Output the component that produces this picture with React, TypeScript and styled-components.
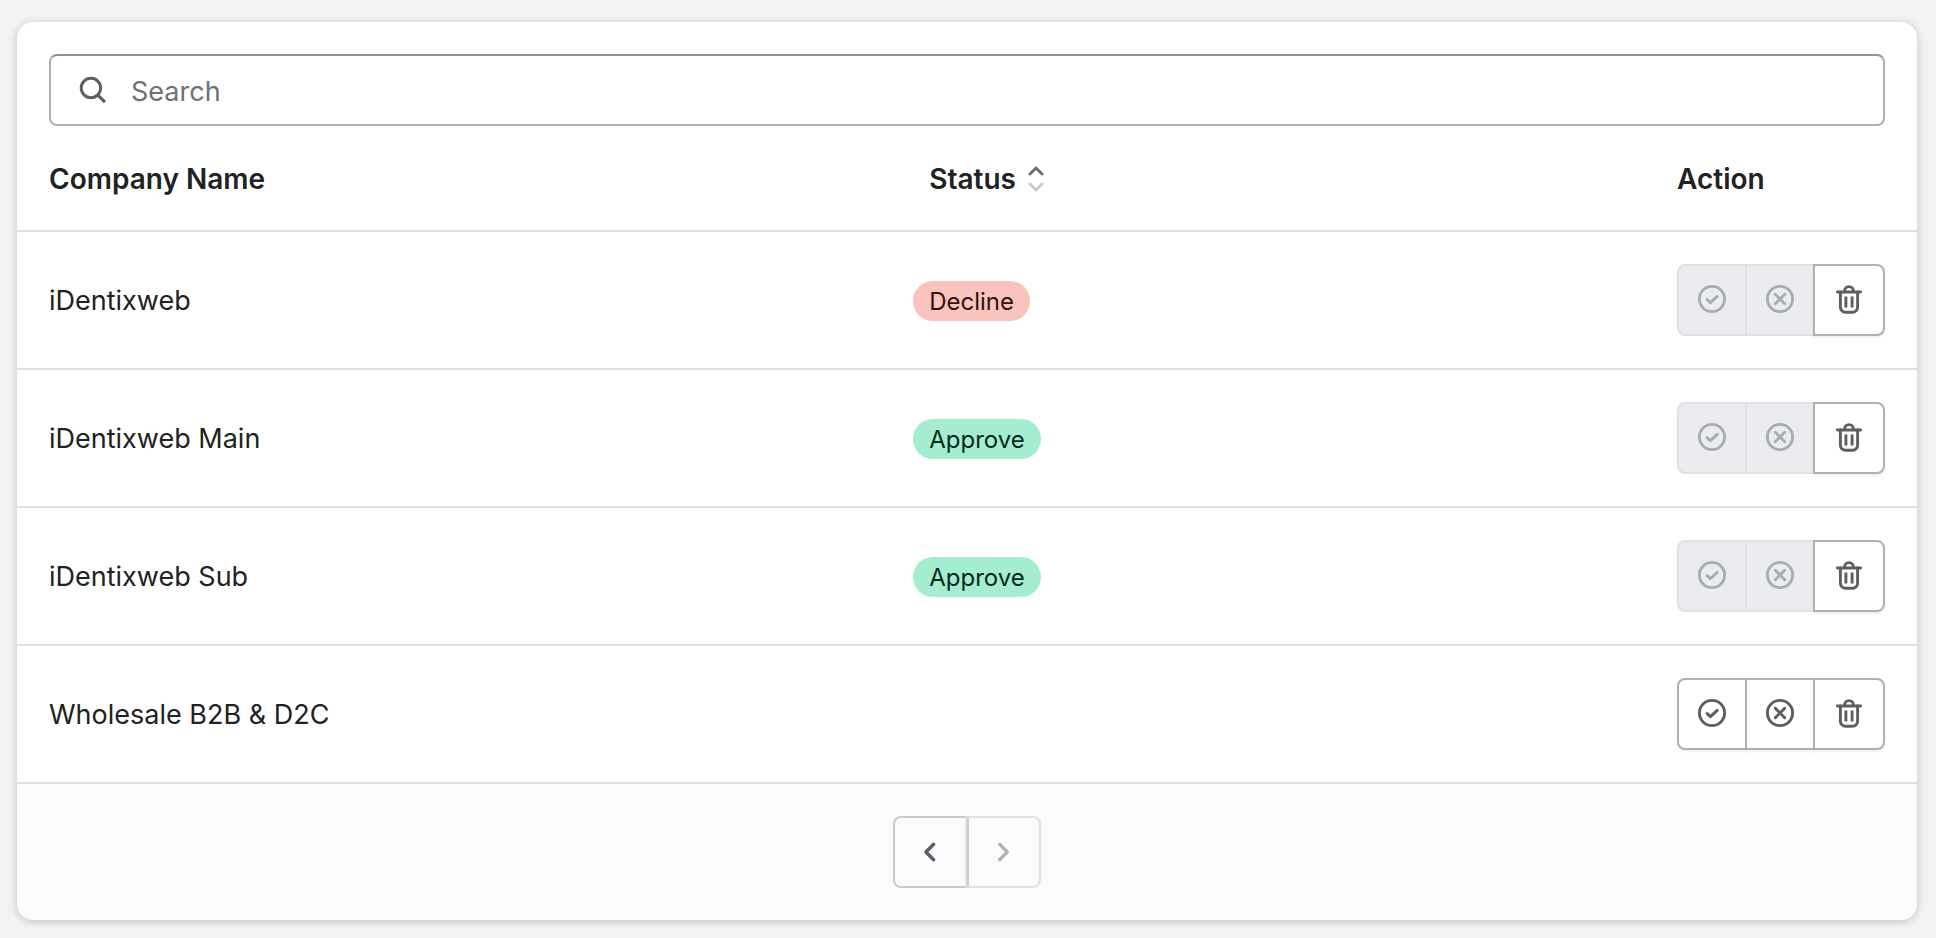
import React, { useState } from "react";
import styled, { createGlobalStyle, css } from "styled-components";

const GlobalStyle = createGlobalStyle`
  *, *::before, *::after { box-sizing: border-box; }
  body {
    margin: 0;
    background: #f1f2f4;
    color: #202223;
    font-family: Inter, "Liberation Sans", sans-serif;
    font-size: 27px;
    line-height: 40px;
  }
  button, input { font: inherit; color: inherit; }
`;

const Page = styled.main`
  padding: 22px 19px 18px 17px;
`;

const Card = styled.section`
  overflow: hidden;
  border-radius: 16px;
  background: #fff;
  box-shadow: 0 0 10px rgba(23, 24, 24, 0.05), 0 2px 8px rgba(0, 0, 0, 0.15);
`;

const SearchField = styled.label`
  display: flex;
  align-items: center;
  gap: 18px;
  height: 72px;
  margin: 32px 32px 0;
  padding: 0 22px;
  border: 2px solid #aeb0b2;
  border-top-color: #8f9193;
  border-radius: 8px;
  color: #5c5f62;
`;

const SearchInput = styled.input`
  flex: 1;
  min-width: 0;
  height: 42px;
  padding: 2px 0 0;
  border: 0;
  outline: 0;
  background: transparent;
  &::placeholder { color: #6d7175; opacity: 1; }
`;

const Table = styled.table`
  width: 100%;
  table-layout: fixed;
  border-spacing: 0;
`;

const StatusCol = styled.col`
  width: 40.2%;
`;

const ActionCol = styled.col`
  width: 272px;
`;

const HeadCell = styled.th`
  height: 104px;
  padding: 2px 32px 0;
  text-align: left;
  font-weight: 600;
  font-size: 28px;
`;

const SortButton = styled.button`
  display: flex;
  align-items: center;
  gap: 8px;
  padding: 0 16px;
  border: 0;
  background: none;
  font-weight: 600;
  cursor: pointer;
`;

const Cell = styled.td`
  height: 138px;
  padding: 0 32px;
  border-top: 2px solid #dfe0e1;
`;

const NameCell = styled(Cell)`
  padding-top: 2px;
`;

const Badge = styled.span<{ $tone: "critical" | "success" }>`
  display: inline-flex;
  align-items: center;
  height: 40px;
  padding: 2px 16px 0;
  border-radius: 20px;
  font-size: 24px;
  vertical-align: middle;
  ${({ $tone }) =>
    $tone === "critical"
      ? css`background: #f9c4bd; color: #33120d;`
      : css`background: #a4edd0; color: #04291c;`}
`;

const ButtonGroup = styled.div`
  display: flex;
  width: max-content;
`;

const ActionButton = styled.button`
  position: relative;
  display: flex;
  align-items: center;
  justify-content: center;
  width: 70px;
  height: 72px;
  padding: 0;
  border: 2px solid #aeb0b2;
  background: #fff;
  color: #5c5f62;
  box-shadow: 0 2px 2px rgba(0, 0, 0, 0.06);
  cursor: pointer;

  & + & { margin-left: -2px; }
  &:first-child { border-radius: 8px 0 0 8px; }
  &:last-child { width: 72px; border-radius: 0 8px 8px 0; }
  &:disabled {
    border-color: #e0e1e3;
    background: #ebecef;
    color: #a9adb2;
    box-shadow: none;
    cursor: default;
  }
`;

const Footer = styled.nav`
  display: flex;
  justify-content: center;
  padding: 32px 0;
  border-top: 2px solid #dfe0e1;
  background: #fafbfc;
`;

const PageButton = styled.button`
  display: flex;
  align-items: center;
  justify-content: center;
  width: 74px;
  height: 72px;
  padding: 0;
  border: 2px solid #c9cbcd;
  background: #fafbfc;
  color: #5c5f62;
  cursor: pointer;

  &:first-child { border-right-color: #e1e2e4; border-radius: 8px 0 0 8px; }
  &:last-child { border-radius: 0 8px 8px 0; }
  &:disabled {
    border-color: #e1e2e4;
    border-left-color: #c9cbcd;
    color: #b2b4b6;
    cursor: default;
  }
`;

const Icon = styled.svg`
  display: block;
  flex: none;
  fill: none;
  stroke: currentColor;
  stroke-width: 2.9;
  stroke-linecap: round;
  stroke-linejoin: round;
`;

const SearchIcon = () => (
  <Icon width="40" height="40" viewBox="-20 -20 40 40" aria-hidden="true">
    <circle cx="-2.1" cy="-2" r="9.7" />
    <path d="M4.8 5.1 12 12.1" strokeWidth="3.2" strokeLinecap="butt" />
  </Icon>
);

const ApproveIcon = () => (
  <Icon width="40" height="40" viewBox="-20 -20 40 40" aria-hidden="true">
    <circle cx="0" cy="-1" r="12.6" />
    <path d="M-4.8-.4-1.6 2.7 5.2-3.6" strokeWidth="3" />
  </Icon>
);

const DeclineIcon = () => (
  <Icon width="40" height="40" viewBox="-20 -20 40 40" aria-hidden="true">
    <circle cx="0" cy="-1" r="12.6" />
    <path d="M-4.7-5.7 4.7 3.7M4.7-5.7-4.7 3.7" strokeWidth="3" />
  </Icon>
);

const DeleteIcon = () => (
  <Icon width="40" height="40" viewBox="-20 -20 40 40" strokeWidth="3" aria-hidden="true">
    <path d="M-11.6-8H11.6" />
    <path d="M-4.4-8.4V-9A4.4 4.4 0 0 1 4.4-9V-8.4" />
    <path d="M-8.6-8V7.2a5 5 0 0 0 5 5h7.2a5 5 0 0 0 5-5V-8" />
    <path d="M-3.1-3.4V7.6M3.1-3.4V7.6" strokeLinecap="butt" />
  </Icon>
);

const SortIcon = () => (
  <Icon width="24" height="26" viewBox="0 0 24 26" aria-hidden="true">
    <path d="M6 8 12 2 18 8" stroke="#6b6d70" />
    <path d="M6 18 12 24 18 18" stroke="#c9cacc" />
  </Icon>
);

const ChevronIcon = ({ next = false }: { next?: boolean }) => (
  <Icon width="40" height="40" viewBox="-20 -20 40 40" aria-hidden="true">
    <path d={next ? "M-4.4-7.7 3.3 0-4.4 7.7" : "M3.6-7.7-4.1 0 3.6 7.7"} strokeWidth="3.4" />
  </Icon>
);

type Status = "Decline" | "Approve" | null;

const companies: { name: string; status: Status }[] = [
  { name: "iDentixweb", status: "Decline" },
  { name: "iDentixweb Main", status: "Approve" },
  { name: "iDentixweb Sub", status: "Approve" },
  { name: "Wholesale B2B & D2C", status: null },
];

export default function App() {
  const [query, setQuery] = useState("");
  const [descending, setDescending] = useState(false);
  const rows = companies.filter((c) => c.name.toLowerCase().includes(query.toLowerCase()));

  return (
    <Page>
      <GlobalStyle />
      <Card>
        <SearchField>
          <SearchIcon />
          <SearchInput
            type="text"
            aria-label="Search"
            placeholder="Search"
            value={query}
            onChange={(e) => setQuery(e.target.value)}
          />
        </SearchField>
        <Table>
          <colgroup>
            <col />
            <StatusCol />
            <ActionCol />
          </colgroup>
          <thead>
            <tr>
              <HeadCell scope="col">Company Name</HeadCell>
              <HeadCell scope="col" aria-sort={descending ? "descending" : "ascending"}>
                <SortButton type="button" onClick={() => setDescending(!descending)}>
                  Status
                  <SortIcon />
                </SortButton>
              </HeadCell>
              <HeadCell scope="col">Action</HeadCell>
            </tr>
          </thead>
          <tbody>
            {rows.map(({ name, status }) => (
              <tr key={name}>
                <NameCell>{name}</NameCell>
                <Cell>
                  {status && (
                    <Badge $tone={status === "Decline" ? "critical" : "success"}>{status}</Badge>
                  )}
                </Cell>
                <Cell>
                  <ButtonGroup>
                    <ActionButton type="button" aria-label="Approve" disabled={status !== null}>
                      <ApproveIcon />
                    </ActionButton>
                    <ActionButton type="button" aria-label="Decline" disabled={status !== null}>
                      <DeclineIcon />
                    </ActionButton>
                    <ActionButton type="button" aria-label="Delete">
                      <DeleteIcon />
                    </ActionButton>
                  </ButtonGroup>
                </Cell>
              </tr>
            ))}
          </tbody>
        </Table>
        <Footer aria-label="Pagination">
          <PageButton type="button" aria-label="Previous">
            <ChevronIcon />
          </PageButton>
          <PageButton type="button" aria-label="Next" disabled>
            <ChevronIcon next />
          </PageButton>
        </Footer>
      </Card>
    </Page>
  );
}
